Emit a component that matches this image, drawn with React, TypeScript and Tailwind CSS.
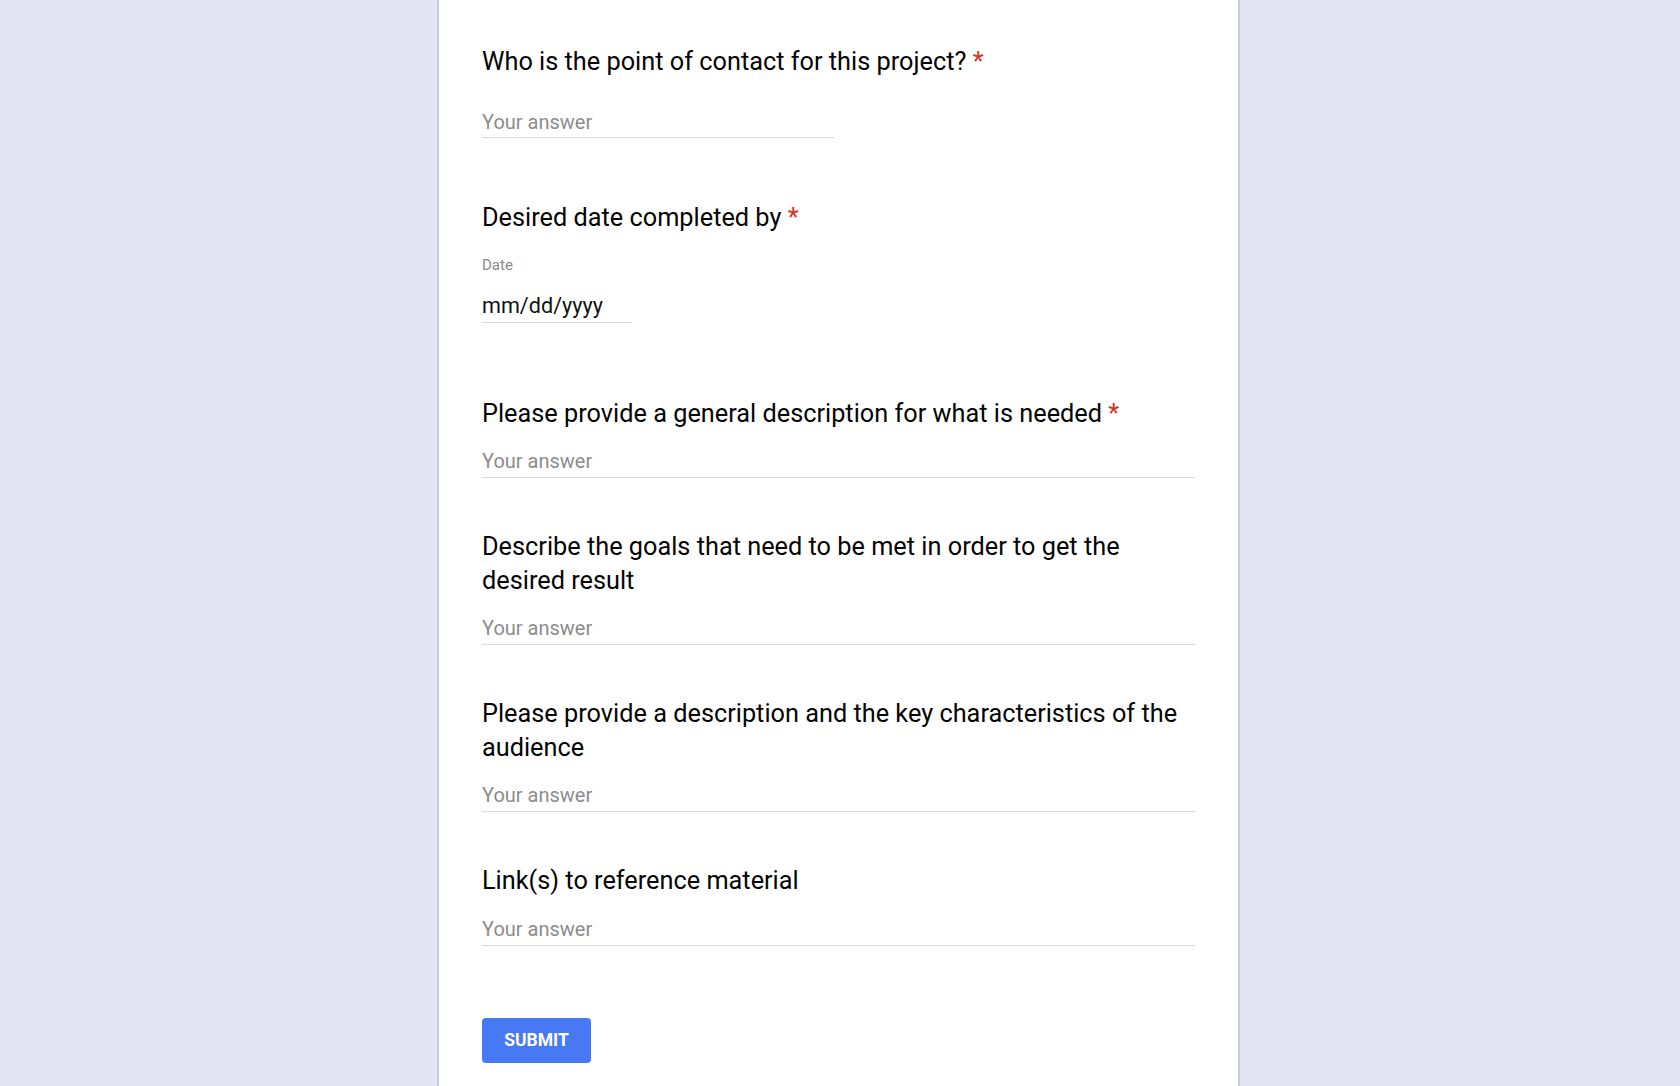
import React from "react";

const font = { fontFamily: "Roboto, 'Liberation Sans', Arial, sans-serif" };

function Title({ children, required }: { children: React.ReactNode; required?: boolean }) {
  return (
    <div className="text-[25.3px] leading-[34px] text-[#050505]">
      {children}
      {required && <span className="text-[#d93025]"> *</span>}
    </div>
  );
}

function Answer() {
  return (
    <div className="w-full border-b border-[#dadada] pb-[4px] text-[20px] leading-[24px] text-[#8c8c8c]">
      Your answer
    </div>
  );
}

export default function App() {
  return (
    <div className="flex min-h-[1086px] w-full justify-center overflow-hidden bg-[#e4e5f4] pr-[3px]" style={font}>
      <div className="h-[1086px] w-[803px] shrink-0 border-x-2 border-[#c9cadb] bg-white px-[43px] pt-[45px]">
        {/* Q1 */}
        <Title required>Who is the point of contact for this project?</Title>
        <div className="mt-[31px] w-[352px] border-b border-[#dadada] pb-[3px] text-[20px] leading-[24px] text-[#8c8c8c]">
          Your answer
        </div>

        {/* Q2 */}
        <div className="mt-[63px]">
          <Title required>Desired date completed by</Title>
          <div className="mt-[20px] text-[15px] leading-[20px] text-[#8a8a8a]">Date</div>
          <div className="mt-[18px] w-[150px] border-b border-[#dadada] pb-[3px] text-[21.6px] leading-[26px] text-[#111111]">
            mm/dd/yyyy
          </div>
        </div>

        {/* Q3 */}
        <div className="mt-[74px]">
          <Title required>Please provide a general description for what is needed</Title>
          <div className="mt-[18px]">
            <Answer />
          </div>
        </div>

        {/* Q4 */}
        <div className="mt-[52px]">
          <Title>
            Describe the goals that need to be met in order to get the
            <br />
            desired result
          </Title>
          <div className="mt-[18px]">
            <Answer />
          </div>
        </div>

        {/* Q5 */}
        <div className="mt-[52px]">
          <Title>
            Please provide a description and the key characteristics of the
            <br />
            audience
          </Title>
          <div className="mt-[18px]">
            <Answer />
          </div>
        </div>

        {/* Q6 */}
        <div className="mt-[52px]">
          <Title>Link(s) to reference material</Title>
          <div className="mt-[19px]">
            <Answer />
          </div>
        </div>

        <button className="mt-[72px] h-[45px] w-[109px] rounded-[4px] bg-[#4779f5] text-[17.5px] font-bold text-white">
          SUBMIT
        </button>
      </div>
    </div>
  );
}
